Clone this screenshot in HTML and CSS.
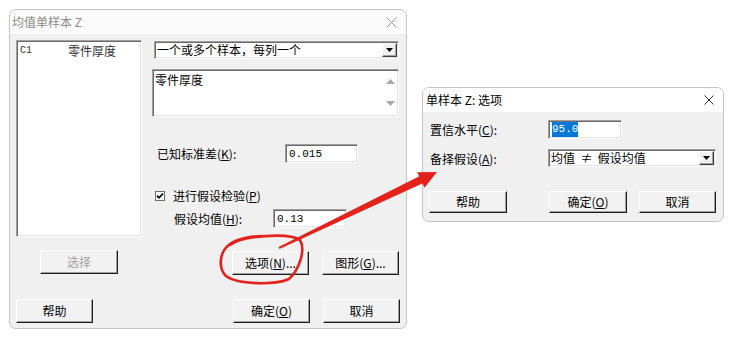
FILE: index.html
```html
<!DOCTYPE html>
<html lang="zh-CN">
<head>
<meta charset="utf-8">
<title>均值单样本 Z</title>
<link rel="stylesheet" href="styles.css">
</head>
<body>
<div class="desk">
  <div class="dlg dlg-main">
    <div class="tbar inactive">
      <span class="ttl">均值单样本 Z</span>
      <svg class="xbtn" width="11" height="11" viewBox="0 0 11 11"><path d="M0.5 0.5L10.5 10.5M10.5 0.5L0.5 10.5" stroke="#9a9a9a" stroke-width="1"/></svg>
    </div>
    <div class="dbody main-body">
      <div class="top">
        <div class="lcol">
          <div class="listbox sunken">
            <span class="mono c1">C1</span><span class="lname">零件厚度</span>
          </div>
          <button class="btn disabled sel">选择</button>
        </div>
        <div class="rcol">
          <div class="combo sunken combo-main">
            <span class="ctext">一个或多个样本，每列一个</span>
            <span class="cbtn"><svg width="7" height="4" viewBox="0 0 7 4"><path d="M0 0H7L3.5 4Z" fill="#000"/></svg></span>
          </div>
          <div class="memo sunken">
            <span class="mtext">零件厚度</span>
            <span class="mscroll">
              <svg width="9" height="5" viewBox="0 0 9 5"><path d="M0 5H9L4.5 0Z" fill="#a8a8a8"/></svg>
              <svg width="9" height="5" viewBox="0 0 9 5"><path d="M0 0H9L4.5 5Z" fill="#a8a8a8"/></svg>
            </span>
          </div>
          <div class="row r-sigma">
            <span class="lbl">已知标准差(<u>K</u>):</span>
            <div class="field sunken f-sigma"><span class="mono">0.015</span></div>
          </div>
          <div class="chkrow">
            <svg class="chk" width="10" height="10" viewBox="0 0 10 10"><rect x="0.5" y="0.5" width="9" height="9" fill="#fff" stroke="#6f6f6f"/><path d="M2 4.6L4 6.8L8 2.6" fill="none" stroke="#000" stroke-width="1.6"/></svg>
            <span class="chklbl">进行假设检验(<u>P</u>)</span>
          </div>
          <div class="row r-mu">
            <span class="lbl">假设均值(<u>H</u>):</span>
            <div class="field sunken f-mu"><span class="mono">0.13</span></div>
          </div>
          <div class="btnrow">
            <button class="btn">选项(<u>N</u>)...</button>
            <button class="btn">图形(<u>G</u>)...</button>
          </div>
        </div>
      </div>
      <div class="bottom">
        <button class="btn">帮助</button>
        <button class="btn push">确定(<u>O</u>)</button>
        <button class="btn">取消</button>
      </div>
    </div>
  </div>

  <div class="dlg dlg-opt">
    <div class="tbar">
      <span class="ttl active">单样本 Z: 选项</span>
      <svg class="xbtn" width="10" height="10" viewBox="0 0 10 10"><path d="M0.5 0.5L9.5 9.5M9.5 0.5L0.5 9.5" stroke="#333" stroke-width="1"/></svg>
    </div>
    <div class="dbody opt-body">
      <div class="orow o1">
        <span class="olbl">置信水平(<u>C</u>):</span>
        <div class="field sunken f-conf"><span class="mono selected">95.0</span></div>
      </div>
      <div class="orow o2">
        <span class="olbl">备择假设(<u>A</u>):</span>
        <div class="combo sunken combo-opt">
          <span class="ctext">均值 &nbsp;≠ &nbsp;假设均值</span>
          <span class="cbtn"><svg width="7" height="4" viewBox="0 0 7 4"><path d="M0 0H7L3.5 4Z" fill="#000"/></svg></span>
        </div>
      </div>
      <div class="obtns">
        <button class="btn obtn b-help">帮助</button>
        <button class="btn obtn b-ok">确定(<u>O</u>)</button>
        <button class="btn obtn b-cancel">取消</button>
      </div>
    </div>
  </div>

  <svg class="ink" width="742" height="338" viewBox="0 0 742 338">
    <path d="M230 245 C242 236 288 232 300 240 C306 250 299 270 289 279 C276 285 238 285 226 276 C218 268 219 252 230 244 C238 238 254 236 262 236" fill="none" stroke="#e4221c" stroke-width="2.6" stroke-linecap="round"/>
    <polygon points="278.6,247.1 419.3,176.2 417.0,172.2 437,172 424.6,187.4 422.3,183.4 279.4,248.9" fill="#e4221c"/>
  </svg>
</div>
</body>
</html>
```

FILE: styles.css
```css
html, body {
  margin: 0;
  padding: 0;
  background: #ffffff;
}

.desk {
  position: relative;
  width: 742px;
  height: 338px;
  overflow: hidden;
  font-family: "Noto Sans CJK SC", "Noto Sans", sans-serif;
  font-size: 12px;
  color: #000;
}

/* dialog windows placed on the desktop */
.dlg {
  position: absolute;
  box-sizing: border-box;
  border: 1px solid #c4c4c4;
  border-radius: 7px;
  background: #f0f0f0;
  overflow: hidden;
}

.dlg-main {
  left: 9px;
  top: 9px;
  width: 398px;
}

.dlg-opt {
  left: 422px;
  top: 87px;
  width: 302px;
}

.tbar {
  height: 24px;
  background: #fbfbfb;
  display: flex;
  align-items: center;
  justify-content: space-between;
  padding: 0 9px 0 2px;
}

.dlg-opt .tbar {
  background: #ffffff;
  padding: 0 9px 0 3px;
}

.ttl {
  line-height: 1;
  color: #8c8c8c;
}

.ttl.active {
  color: #000;
}

.xbtn {
  display: block;
}

/* generic 3D parts */
.sunken {
  box-sizing: border-box;
  border: 1px solid;
  border-color: #a0a0a0 #ffffff #ffffff #a0a0a0;
  box-shadow: inset 1px 1px 0 #696969, inset -1px -1px 0 #e3e3e3;
  background: #ffffff;
}

.btn {
  box-sizing: border-box;
  width: 77px;
  height: 24px;
  margin: 0;
  padding: 0;
  font: inherit;
  color: #000;
  background: #f2f2f2;
  border: 1px solid;
  border-color: #ffffff #1e1e1e #1e1e1e #ffffff;
  box-shadow: inset -1px -1px 0 #a0a0a0;
  line-height: 1;
  text-align: center;
}

.btn.disabled {
  color: #a3a3a3;
}

.mono {
  font-family: "Liberation Mono", "DejaVu Sans Mono", monospace;
  font-size: 11px;
}

u {
  text-decoration: underline;
  text-underline-offset: 1px;
}

/* main dialog body */
.main-body {
  padding: 6px 6px 5px 6px;
}

.top {
  display: flex;
  gap: 10px;
}

.lcol {
  width: 126px;
  display: flex;
  flex-direction: column;
}

.listbox {
  height: 197px;
  display: flex;
  align-items: flex-start;
  padding: 3px 0 0 3px;
  line-height: 14px;
}

.c1 {
  width: 48px;
  line-height: 14px;
  font-size: 10px;
  color: #333;
}

.lname {
  color: #333;
}

.sel {
  margin: 13px 0 0 24px;
  width: 78px;
}

.rcol {
  width: 247px;
  display: flex;
  flex-direction: column;
}

.combo {
  display: flex;
  align-items: center;
  justify-content: space-between;
  padding: 0 1px 0 2px;
}

.combo-main {
  margin: 1px 0 0 2px;
  width: 245px;
  height: 18px;
}

.ctext {
  line-height: 1;
  white-space: nowrap;
}

.cbtn {
  box-sizing: border-box;
  width: 15px;
  height: 14px;
  display: flex;
  align-items: center;
  justify-content: center;
  background: #f0f0f0;
  border: 1px solid;
  border-color: #ffffff #404040 #404040 #ffffff;
  box-shadow: inset -1px -1px 0 #a0a0a0;
}

.memo {
  margin-top: 10px;
  height: 48px;
  display: flex;
  justify-content: space-between;
  padding: 3px 3px 0 2px;
}

.mtext {
  line-height: 14px;
}

.mscroll {
  display: flex;
  flex-direction: column;
  justify-content: space-between;
  padding: 6px 0 7px 0;
  box-sizing: border-box;
  height: 40px;
}

.mscroll svg {
  display: block;
}

.row {
  display: flex;
  align-items: center;
  height: 19px;
}

.r-sigma {
  margin-top: 27px;
  padding-left: 5px;
}

.r-sigma .lbl {
  width: 128px;
}

.field {
  height: 19px;
  display: flex;
  align-items: center;
  padding-left: 3px;
}

.f-sigma {
  width: 73px;
}

.chkrow {
  margin-top: 26px;
  height: 14px;
  display: flex;
  align-items: center;
  padding-left: 3px;
}

.chk {
  display: block;
}

.chklbl {
  margin-left: 8px;
  line-height: 1;
}

.r-mu {
  margin-top: 6px;
  padding-left: 22px;
}

.r-mu .lbl {
  width: 99px;
}

.f-mu {
  width: 74px;
}

.btnrow {
  margin-top: 23px;
  display: flex;
  justify-content: flex-end;
  gap: 13px;
}

.bottom {
  margin-top: 24px;
  display: flex;
  gap: 13px;
}

.bottom .push {
  margin-left: auto;
}

/* options dialog */
.opt-body {
  padding: 0 6px 8px 7px;
}

.orow {
  display: flex;
  align-items: center;
}

.olbl {
  width: 118px;
}

.o1 {
  margin-top: 8px;
  height: 19px;
}

.f-conf {
  width: 74px;
}

.selected {
  background: #0078d7;
  color: #ffffff;
  padding: 1px 0;
  line-height: 13px;
}

.o2 {
  margin-top: 10px;
  height: 18px;
}

.combo-opt {
  width: 168px;
  height: 18px;
}

.obtns {
  margin-top: 24px;
  display: flex;
}

.obtn {
  height: 22px;
}

.b-help {
  margin-left: -1px;
  width: 78px;
}

.b-ok {
  margin-left: 42px;
  width: 78px;
}

.b-cancel {
  margin-left: 12px;
  width: 77px;
}

/* red hand-drawn annotation over everything */
.ink {
  position: absolute;
  left: 0;
  top: 0;
  pointer-events: none;
}
```
